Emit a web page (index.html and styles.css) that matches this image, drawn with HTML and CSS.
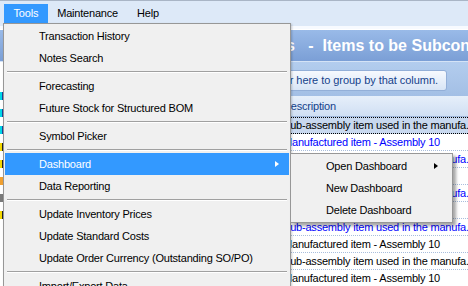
FILE: index.html
```html
<!DOCTYPE html>
<html lang="en">
<head>
  <meta charset="UTF-8" />
  <title>Tools menu</title>
  <link rel="stylesheet" href="styles.css">
</head>
<body>
  <div class="menubar">
    <div class="mb-item">
      <span class="mb-label active">Tools</span>
      <ul class="menu">
        <li>Transaction History</li>
        <li>Notes Search</li>
        <li class="sep"></li>
        <li>Forecasting</li>
        <li>Future Stock for Structured BOM</li>
        <li class="sep"></li>
        <li>Symbol Picker</li>
        <li class="sep"></li>
        <li class="open">Dashboard<span class="arrow"></span>
          <ul class="submenu">
            <li>Open Dashboard<span class="arrow sub"></span></li>
            <li>New Dashboard</li>
            <li>Delete Dashboard</li>
          </ul>
        </li>
        <li>Data Reporting</li>
        <li class="sep"></li>
        <li>Update Inventory Prices</li>
        <li>Update Standard Costs</li>
        <li>Update Order Currency (Outstanding SO/PO)</li>
        <li class="sep"></li>
        <li>Import/Export Data</li>
        <li>Batch Processing</li>
      </ul>
    </div>
    <span class="mb-label">Maintenance</span>
    <span class="mb-label">Help</span>
  </div>

  <div class="titlebar">
    <span class="title-pre"><span>Subcontract Components</span></span><span class="title-rest">   -  Items to be Subcontracted</span>
  </div>

  <div class="workspace">
    <div class="tree">
      <div class="tree-row"><span class="ico i-cyan"></span></div>
      <div class="tree-row"><span class="ico i-cyan"></span></div>
      <div class="tree-row"><span class="ico i-cyan"></span></div>
      <div class="tree-row"><span class="ico i-yellow"></span></div>
      <div class="tree-row"><span class="ico i-yellow"></span></div>
      <div class="tree-row"><span class="ico i-orange"></span></div>
      <div class="tree-row"><span class="ico i-gray"></span></div>
      <div class="tree-row"><span class="ico i-yellow"></span></div>
    </div>

    <div class="grid">
      <div class="groupbox">
        <span class="group-hint">Drag a column header here to group by that column.</span>
      </div>
      <div class="grid-head">
        <span class="c-code">Item Code</span>
        <span class="c-desc">Description</span>
      </div>
      <div class="row sel"><span class="c-code">SUB-100</span><span class="c-desc">Sub-assembly item used in the manufa...</span></div>
      <div class="row blue"><span class="c-code">ASM-10</span><span class="c-desc">Manufactured item - Assembly 10</span></div>
      <div class="row blue"><span class="c-code">SUB-100</span><span class="c-desc">Sub-assembly item used in the manufa...</span></div>
      <div class="row blue"><span class="c-code">ASM-10</span><span class="c-desc">Manufactured item - Assembly 10</span></div>
      <div class="row blue"><span class="c-code">SUB-100</span><span class="c-desc">Sub-assembly item used in the manufa...</span></div>
      <div class="row blue"><span class="c-code">ASM-10</span><span class="c-desc">Manufactured item - Assembly 10</span></div>
      <div class="row blue"><span class="c-code">SUB-100</span><span class="c-desc">Sub-assembly item used in the manufa...</span></div>
      <div class="row"><span class="c-code">ASM-10</span><span class="c-desc">Manufactured item - Assembly 10</span></div>
      <div class="row"><span class="c-code">SUB-100</span><span class="c-desc">Sub-assembly item used in the manufa...</span></div>
      <div class="row"><span class="c-code">ASM-10</span><span class="c-desc">Manufactured item - Assembly 10</span></div>
    </div>
  </div>
</body>
</html>
```

FILE: styles.css
```css
* {
  box-sizing: border-box;
}

html,
body {
  margin: 0;
  height: 286px;
  overflow: hidden;
}

body {
  font-family: "Liberation Sans", Arial, sans-serif;
  font-size: 11px;
  letter-spacing: -0.2px;
  background: #fff;
  color: #000;
}

/* menu bar */
.menubar {
  display: flex;
  height: 29px;
  padding: 3px 0 0 4px;
  border-top: 1px solid #a9b5c6;
  border-bottom: 3px solid #f7faff;
  background: #dde9f8;
}

.mb-item {
  position: relative;
}

.mb-label {
  display: block;
  height: 19px;
  line-height: 19px;
  padding: 0 9.5px;
}

.mb-label.active {
  background: #3399ff;
  color: #fff;
}

/* dropdown */
.menu,
.submenu {
  position: absolute;
  margin: 0;
  padding: 1px 0;
  list-style: none;
  background: #f0f0f0;
  border: 1px solid #979797;
  color: #000;
  z-index: 2;
}

.menu {
  left: -1px;
  top: 19px;
  width: 288px;
  box-shadow: 1px 1px 2px rgba(0, 0, 0, 0.2);
}

.menu li {
  position: relative;
  height: 22px;
  line-height: 22px;
  margin: 0 1px;
  padding-left: 34px;
  white-space: nowrap;
}

.menu li.sep {
  height: 2px;
  margin: 2px 3px;
  padding: 0;
  border-top: 1px solid #a0a0a0;
  border-bottom: 1px solid #fff;
}

.menu li.open {
  background: #3399ff;
  color: #fff;
}

.arrow {
  position: absolute;
  right: 10px;
  top: 8px;
  width: 0;
  height: 0;
  border-left: 4px solid currentColor;
  border-top: 3.5px solid transparent;
  border-bottom: 3.5px solid transparent;
}

.arrow.sub {
  right: 13px;
}

.submenu {
  left: calc(100% + 1px);
  top: 0;
  width: 163px;
  box-shadow: 3px 3px 3px rgba(0, 0, 0, 0.35);
}

/* window title */
.titlebar {
  display: flex;
  align-items: center;
  height: 33px;
  border-top: 1px solid #fff;
  border-bottom: 1px solid #d4e3f6;
  background: linear-gradient(#99bae8, #7b9fd6);
  color: #fff;
  font-size: 16px;
  font-weight: bold;
  letter-spacing: 0;
  white-space: pre;
  overflow: hidden;
}

.title-pre {
  flex: none;
  width: 295px;
  display: flex;
  justify-content: flex-end;
  overflow: hidden;
}

/* workspace */
.workspace {
  display: flex;
  height: 224px;
}

.tree {
  width: 170px;
  flex: none;
  padding-top: 25px;
  background: #fff;
  border-right: 1px solid #8ba7d2;
}

.tree-row {
  height: 17px;
  display: flex;
  align-items: center;
}

.ico {
  width: 4px;
  height: 8px;
}

.i-cyan { background: linear-gradient(90deg, #00d8e8 50%, #1d3f9a 50%); }
.i-yellow { background: linear-gradient(90deg, #f5d800 50%, #222 50%); }
.i-orange { background: #f0a030; }
.i-gray { background: #7a7a7a; }

.grid {
  flex: 1;
  min-width: 0;
  overflow: hidden;
}

.groupbox {
  height: 34px;
  display: flex;
  justify-content: flex-end;
  padding: 8px 21px 0 0;
  background: linear-gradient(#b3cdee, #a3bfe5);
}

.group-hint {
  height: 21px;
  line-height: 19px;
  padding: 0 8px 0 10px;
  border: 1px solid #93afd8;
  border-radius: 3px;
  background: linear-gradient(#f6f9fe, #d8e5f6);
  color: #15428b;
  white-space: nowrap;
  letter-spacing: -0.05px;
}

.grid-head {
  display: flex;
  height: 21px;
  line-height: 20px;
  border-bottom: 1px solid #9db5d9;
  background: linear-gradient(#e6effa, #d0dff3);
  color: #15428b;
}

.c-code {
  width: 111px;
  flex: none;
  padding-left: 3px;
  overflow: hidden;
  white-space: nowrap;
}

.c-desc {
  flex: 1;
  padding-left: 2px;
  overflow: hidden;
  white-space: nowrap;
}

.row {
  display: flex;
  height: 17px;
  line-height: 16px;
  border-bottom: 1px dotted #a9bedc;
}

.row.sel {
  line-height: 15px;
  background: #c8d8ee;
  border-top: 1px dotted #000;
  border-bottom: 1px dotted #000;
}

.row.blue {
  color: #0000ff;
}
```
